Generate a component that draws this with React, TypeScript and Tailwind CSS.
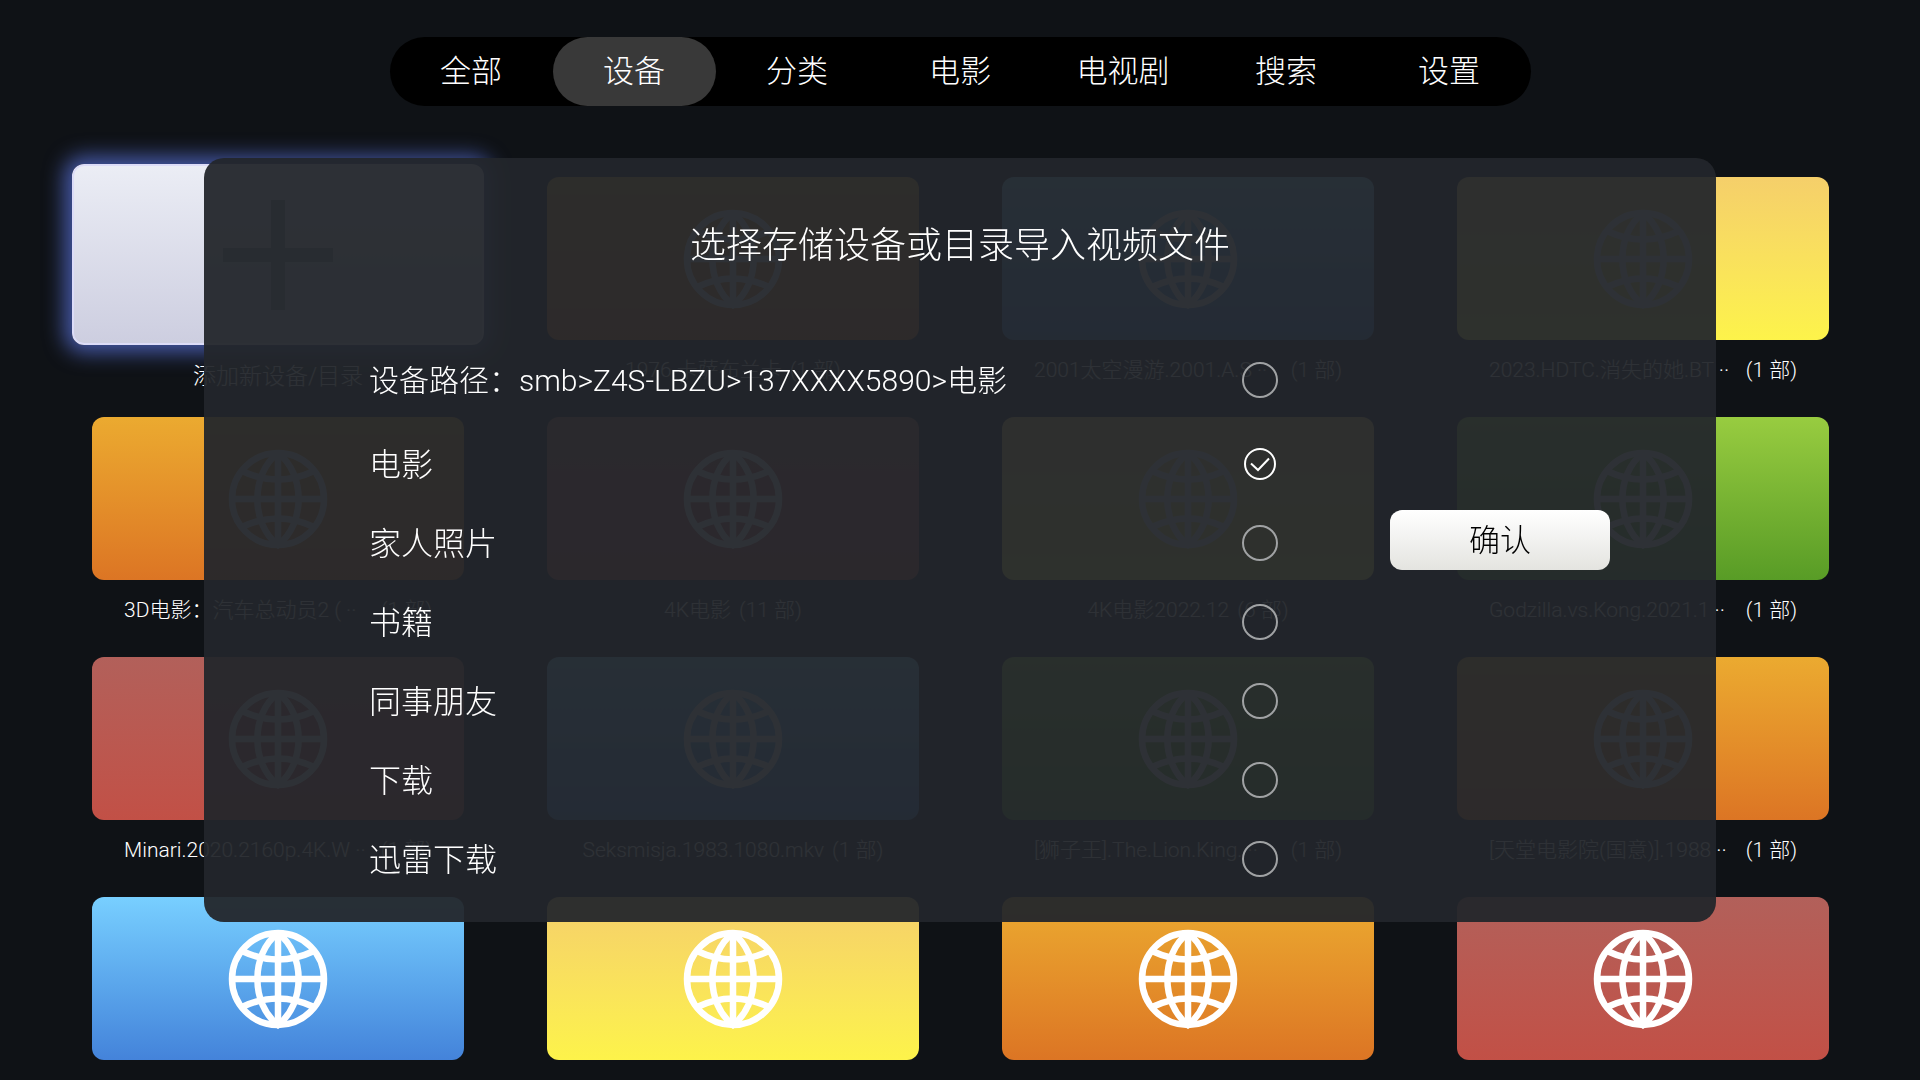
import { useState } from "react";

const tabs = ["全部", "设备", "分类", "电影", "电视剧", "搜索", "设置"];

const tones = {
    orange: "from-[#ebaa30] to-[#dc7524]",
    blue: "from-[#78cfff] to-[#4483da]",
    yellow: "from-[#f5cf6a] to-[#fdf34a]",
    red: "from-[#b2605a] to-[#c25046]",
    green: "from-[#98cc40] to-[#589c26]",
};

type Tone = keyof typeof tones;

// long names are cut with two dots and push the count to the right edge
type Device = { id: number; tone: Tone; name?: string; count?: string; long?: boolean };

const devices: Device[] = [
    { id: 1, name: "1976.卡萨布兰卡", count: "(1 部)", tone: "orange" },
    { id: 2, name: "2001太空漫游.2001.A.S ··", count: "(1 部)", tone: "blue", long: true },
    { id: 3, name: "2023.HDTC.消失的她.BT ··", count: "(1 部)", tone: "yellow", long: true },
    { id: 4, name: "3D电影：汽车总动员2 ( ··", count: "(1 部)", tone: "orange", long: true },
    { id: 5, name: "4K电影", count: "(11 部)", tone: "red" },
    { id: 6, name: "4K电影2022.12", count: "(6 部)", tone: "yellow" },
    { id: 7, name: "Godzilla.vs.Kong.2021.1 ··", count: "(1 部)", tone: "green", long: true },
    { id: 8, name: "Minari.2020.2160p.4K.W ··", count: "(1 部)", tone: "red", long: true },
    { id: 9, name: "Seksmisja.1983.1080.mkv", count: "(1 部)", tone: "blue" },
    { id: 10, name: "[狮子王].The.Lion.King. ··", count: "(1 部)", tone: "green", long: true },
    { id: 11, name: "[天堂电影院(国意)].1988 ··", count: "(1 部)", tone: "orange", long: true },
    { id: 12, tone: "blue" },
    { id: 13, tone: "yellow" },
    { id: 14, tone: "orange" },
    { id: 15, tone: "red" },
];

const folders = ["电影", "家人照片", "书籍", "同事朋友", "下载", "迅雷下载"];

function Globe() {
    return (
        <svg viewBox="-50 -50 100 100" className="size-[100px]" fill="none" stroke="white" strokeWidth="6.5" aria-hidden="true">
            <circle r="46" />
            <path d="M0 -46V46M-46 0H46" />
            <path d="M0 -46C-27.5 -25 -27.5 25 0 46C27.5 25 27.5 -25 0 -46" />
            <path d="M-36 -28Q0 -11 36 -28M-36 28Q0 11 36 28" />
        </svg>
    );
}

function DeviceCard({ device }: { device: Device }) {
    return (
        <a href="#" className="block h-[240px]">
            <div className={`flex h-[163px] items-center justify-center rounded-xl bg-linear-to-b ${tones[device.tone]}`}>
                <Globe />
            </div>
            {device.name && (
                <div className={`mt-4 flex h-7 items-center gap-2 px-8 text-[21px] leading-7 whitespace-nowrap ${device.long ? "justify-between" : "justify-center"}`}>
                    <span>{device.name}</span>
                    <span>{device.count}</span>
                </div>
            )}
        </a>
    );
}

function AddCard() {
    return (
        <a href="#" className="block h-[240px]">
            <div className="-mx-5 -mt-[13px] flex h-[181px] items-center justify-center rounded-xl border-2 border-[#dcdcf8] bg-linear-to-b from-[#ebedf5] to-[#cdcee0] shadow-[0_0_20px_8px_rgba(86,110,210,0.75)]">
                <svg viewBox="0 0 110 110" className="size-[110px]" stroke="#929398" strokeWidth="14" aria-hidden="true">
                    <path d="M55 0V110M0 55H110" />
                </svg>
            </div>
            <div className="mt-4 flex h-8 items-center justify-center text-[23px]">添加新设备/目录</div>
        </a>
    );
}

function Tick({ id, checked, onChange }: { id: string; checked: boolean; onChange: () => void }) {
    return (
        <span className="relative flex size-9 items-center justify-center">
            <input
                id={id}
                type="checkbox"
                checked={checked}
                onChange={onChange}
                className="size-9 appearance-none rounded-full border-2 border-[#a0a2a4] checked:size-8 checked:border-white"
            />
            {checked && (
                <svg viewBox="0 0 32 32" className="pointer-events-none absolute size-8" fill="none" stroke="white" strokeWidth="2" aria-hidden="true">
                    <path d="M7 15.5L14 22L25 10.5" />
                </svg>
            )}
        </span>
    );
}

export default function App() {
    const [activeTab, setActiveTab] = useState("设备");
    const [selected, setSelected] = useState<string[]>(["电影"]);

    const toggle = (name: string) =>
        setSelected((prev) => (prev.includes(name) ? prev.filter((n) => n !== name) : [...prev, name]));

    return (
        <div className="h-screen overflow-hidden bg-[#0f1216] font-['Roboto','Noto_Sans_CJK_SC',sans-serif] font-light text-white">
            {/* Top tabs */}
            <header className="flex justify-center pt-[37px]">
                <nav className="flex h-[69px] rounded-full bg-black">
                    {tabs.map((tab) => (
                        <button
                            key={tab}
                            type="button"
                            onClick={() => setActiveTab(tab)}
                            className={`w-[163px] rounded-full pt-0.5 text-[31px] ${tab === activeTab ? "bg-[#393939]" : ""}`}
                        >
                            {tab}
                        </button>
                    ))}
                </nav>
            </header>

            {/* Device grid */}
            <main className="mt-[71px] grid grid-cols-4 gap-x-[83px] pr-[91px] pl-[92px]">
                <AddCard />
                {devices.map((device) => (
                    <DeviceCard key={device.id} device={device} />
                ))}
            </main>

            {/* Import dialog */}
            <div className="fixed inset-0 flex items-center px-[204px]">
                <div role="dialog" aria-labelledby="dialog-title" className="w-full rounded-[20px] bg-[#23262b]/95 pt-16 pb-6">
                    <h2 id="dialog-title" className="text-center text-4xl leading-[48px]">选择存储设备或目录导入视频文件</h2>
                    <div className="mt-[70px] flex items-start gap-28 pr-[106px] pl-[165px]">
                        <div className="flex-1">
                            <div className="mb-1 flex h-20 items-center justify-between text-[30px]">
                                <label htmlFor="path">设备路径：smb&gt;Z4S-LBZU&gt;137XXXX5890&gt;电影</label>
                                <Tick
                                    id="path"
                                    checked={selected.length === folders.length}
                                    onChange={() => setSelected(selected.length === folders.length ? [] : folders)}
                                />
                            </div>
                            {folders.map((name) => (
                                <div key={name} className="flex h-[79px] items-center justify-between text-[32px]">
                                    <label htmlFor={name} className="pt-0.5">{name}</label>
                                    <Tick id={name} checked={selected.includes(name)} onChange={() => toggle(name)} />
                                </div>
                            ))}
                        </div>
                        <button type="button" className="mt-[170px] h-[60px] w-[220px] rounded-xl bg-linear-to-b from-white to-[#e4e4e0] pt-0.5 text-[31px] text-black">
                            确认
                        </button>
                    </div>
                </div>
            </div>
        </div>
    );
}
